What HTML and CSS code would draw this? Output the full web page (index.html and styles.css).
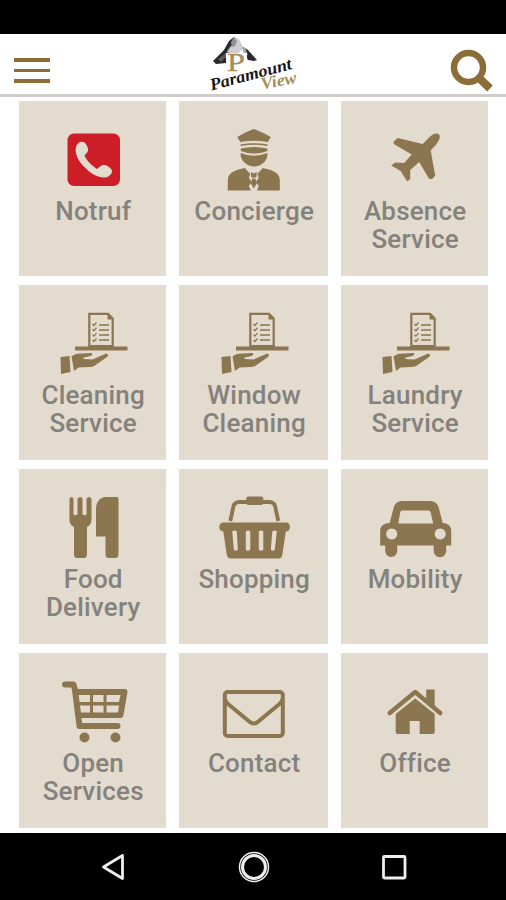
FILE: index.html
```html
<!DOCTYPE html>
<html lang="de">
<head>
  <meta charset="UTF-8" />
  <title>Paramount View</title>
  <link rel="stylesheet" href="styles.css">
</head>
<body>
  <svg class="symbols" aria-hidden="true">
    <symbol id="service" viewBox="-2.5 1 90 80">
      <path d="M38.800 13.800h18.700l4.700 4.700V46H38.800z" fill="none" stroke="#8c7650" stroke-width="2.200"/>
      <path d="M57 13v6.500h6z"/>
      <path d="M24.500 46.500h52.500v4H24.500z"/>
      <path d="M48.500 25h10M48.500 30h10M48.500 35h10M48.500 40h10" fill="none" stroke="#8c7650" stroke-width="1.500"/>
      <path d="M42 24l1.400 1.500 2.600-3M42 29.300l1.400 1.500 2.600-3M42 34.600l1.400 1.500 2.600-3M42 40l1.400 1.500 2.600-3" fill="none" stroke="#8c7650" stroke-width="1.300"/>
      <path d="M10 57l9-1 1 16-9.500 2z"/>
      <path d="M21 56.500c4-3 7-3.200 11-3l8.500-.5c2 0 1.500 2.500-.5 3l-7 1.500v1.500l9 .5 12.500-5.500c3-.8 4 1.500 2 3L44 65.800c-2 1.200-4 1.200-6 1.200l-10 .5-4.500 3.500-1-6z"/>
    </symbol>
  </svg>

  <div class="status-bar"></div>

  <header class="header">
    <button class="menu" aria-label="Menu"><span></span><span></span><span></span></button>
    <svg class="logo" width="110" height="60" viewBox="0 0 110 60">
      <path d="M34 3L29 7l-5 9-11 11 3 3 10-1V19h8l5-9z" fill="#29292c"/>
      <path d="M18 25l8-6 3-6 3-3-5 12-6 6z" fill="#5b5b5f"/>
      <path d="M34 3l5 2 5 10-4 2-1 3-9-1-3-1 5-7z" fill="#cfcfd2"/>
      <path d="M34 3l3 4-2 5-3 1-1-5z" fill="#919196"/>
      <path d="M43 13l5 3 9 10-3 1-6-1-4-8z" fill="#29292c"/>
      <path d="M42 13l3 1 3 7-4-1z" fill="#a8a8ac"/>
      <path d="M26 19h21v9H26z" fill="#fff"/>
      <text class="logo-letter" x="27" y="36.500" textLength="18" lengthAdjust="spacingAndGlyphs">P</text>
      <text class="logo-name" transform="translate(11.500 56.500) rotate(-15)" textLength="84" lengthAdjust="spacingAndGlyphs">Paramount</text>
      <text class="logo-view" transform="translate(62 55.500) rotate(-11)" textLength="36" lengthAdjust="spacingAndGlyphs">View</text>
    </svg>
    <svg class="search" width="44" height="44" viewBox="0 0 44 44">
      <circle cx="18.500" cy="18.500" r="14.500" fill="none" stroke="#8c6d38" stroke-width="6.500"/>
      <path d="M28.500 28.500L40 39.500" stroke="#8c6d38" stroke-width="8"/>
    </svg>
  </header>

  <main class="grid">
    <a class="tile">
      <svg class="icon" viewBox="-2.5 -3.5 90 80">
        <rect x="17" y="13" width="52.500" height="52.500" rx="6.500" fill="#cd1d27"/>
        <path d="M26 25c1.500-3 5-5 8-3 3 3 4.500 7 3 9.500l-3 3.500c2 5 7.500 10.500 12.500 13.500l4.500-3.500c3.500-1.500 7.500 1 10 4 1.500 2.500-.5 5.500-4 7.500-7 2-15-2-21.500-8.500C28 41.500 23 32 26 25z" fill="#e2dbce"/>
      </svg>
      <span class="label">Notruf</span>
    </a>
    <a class="tile">
      <svg class="icon" viewBox="-1.3 -3.5 90 80">
        <path d="M27 16.500L35 12l8.500-3.500L52 12l8.500 4.500-3 5q-14-2.500-27.500 0z"/>
        <path d="M30 24q14-2.500 27.500 0l-.5 1.500q-13-2.500-26.500 0z"/>
        <path d="M30.500 28q13-3 26.500 0v2.500q-13 5-26.500 0z"/>
        <path d="M30.500 32.500q13 5.500 26.500 0C58 41 50 46 43.500 46S29 40 30.500 32.500z"/>
        <path d="M17.500 70V60c0-7 5-10 17-12.500l5.500 6-1.500 4 3 4-3 4 2 4.500z"/>
        <path d="M69.500 70V60c0-7-5-10-17-12.500l-5.500 6 1.500 4-3 4 3 4-2 4.500z"/>
        <path d="M40.500 51.500l3 1.500 3-1.500-.5 5.500h-5zM42 58h3l1.500 5-3 5-3-5z"/>
      </svg>
      <span class="label">Concierge</span>
    </a>
    <a class="tile">
      <svg class="icon" viewBox="-5.2 -3.5 90 80">
        <path d="M64 14c-3-2.500-7.500 0-10.500 3.500L47.500 23.500 22.500 17.500l-4 3.500v2.500L36.500 34 29 42.500l-9-.5-4 3 9.500 5.500L32 61l3-2.500v-9l9-8 10 17 3 0 3-3.500-4.500-25 5.500-6c3-4 4.500-7.500 3-10z"/>
      </svg>
      <span class="label">Absence<br>Service</span>
    </a>

    <a class="tile">
      <svg class="icon"><use href="#service"/></svg>
      <span class="label">Cleaning<br>Service</span>
    </a>
    <a class="tile">
      <svg class="icon"><use href="#service"/></svg>
      <span class="label">Window<br>Cleaning</span>
    </a>
    <a class="tile">
      <svg class="icon"><use href="#service"/></svg>
      <span class="label">Laundry<br>Service</span>
    </a>

    <a class="tile">
      <svg class="icon" viewBox="-2.5 0 90 80">
        <path d="M19 13.500q2-3 4 0V29q1.500 2.500 4 0V13.500q3-3 5 0V29q2 2.500 4 0V13.500q2.500-3 5 0V35q0 5-4.500 7v27q0 4-3 4h-7q-3 0-3-4V42Q19 40 19 35z"/>
        <path d="M68 14v55q0 4-3 4h-7q-3 0-3-4V51.500h-9.500V24c0-7 4-12 10-12h10.500q2 0 2 2z"/>
      </svg>
      <span class="label">Food<br>Delivery</span>
    </a>
    <a class="tile">
      <svg class="icon" viewBox="-1.3 0 90 80">
        <path d="M20 36l3-14q1-5 6-5h30q5 0 6 5l3 14" fill="none" stroke="#8c7650" stroke-width="3.800"/>
        <rect x="36" y="11.500" width="17" height="8.500" rx="2"/>
        <path fill-rule="evenodd" d="M12.500 37.500h63.500q3.500 0 3.500 4.500t-4 4.500L72 70q-.5 3.500-4 3.500H20.500q-3 0-4-3.500L13 46.500Q9 46 9 42t3.500-4.500zM22 46.500l1.500 18q2 2.500 4 0l-1-18q-2-2-4.500 0zM35.500 46.500v18q2 2.500 4.500 0v-18q-2-2-4.500 0zM48.500 46.500v18q2 2.500 4.500 0v-18q-2-2-4.500 0zM62 46.500l-1.500 18q2 2.500 4 0l2-18q-2-2-4.500 0z"/>
      </svg>
      <span class="label">Shopping</span>
    </a>
    <a class="tile">
      <svg class="icon" viewBox="-0.2 0 90 80">
        <path fill-rule="evenodd" d="M33 16h26c5 0 8 2 9.500 6.500L72.500 38C78 38.500 81 41 81 46v14.500h-5V66a6 6 0 0 1-12.500 0v-5.500H27V66a6 6 0 0 1-12 0v-5.500h-5V46c0-5 3-7.500 9.500-8l4-15.500C25 18 28 16 33 16zM32 25.500q-1.500 0-2 2L28 38.500h35l-2.500-11q-.5-2-2-2zM21.500 43.500a5.500 5.500 0 1 0 .01 0zM70 43.500a5.500 5.500 0 1 0 .01 0z"/>
      </svg>
      <span class="label">Mobility</span>
    </a>

    <a class="tile">
      <svg class="icon" viewBox="-2.5 -1 90 80">
        <path d="M14.500 14.500h8.500l1.500 5.500L29 56h38" fill="none" stroke="#8c7650" stroke-width="6" stroke-linecap="round" stroke-linejoin="round"/>
        <path fill-rule="evenodd" d="M23 19h51q3 0 3 3l-4 23q-.500 3-3 3H29zM28 25v7h11.500v-7zM42.500 25v7H53v-7zM56 25v7h12.500l1.500-7zM29 35.500l1 7h9.500v-7zM42.500 35.500v7H53v-7zM56 35.500v7h11.500l1-7z"/>
        <circle cx="34" cy="67.500" r="5"/>
        <circle cx="65" cy="67.500" r="5"/>
      </svg>
      <span class="label">Open<br>Services</span>
    </a>
    <a class="tile">
      <svg class="icon" viewBox="-1.3 -1 90 80">
        <g fill="none" stroke="#8c7650" stroke-width="4">
          <rect x="14.500" y="22" width="58" height="44" rx="3"/>
          <path d="M15 29q0 3 4 6l20 16.500q4.500 4 9 0L68 35q4-3 4-6"/>
        </g>
      </svg>
      <span class="label">Contact</span>
    </a>
    <a class="tile">
      <svg class="icon" viewBox="-0.2 -1 90 80">
        <path d="M19.500 43L45 22l25 21" fill="none" stroke="#8c7650" stroke-width="4.500" stroke-linecap="round" stroke-linejoin="round"/>
        <path d="M56 19.500h8.500V37L56 30z"/>
        <path d="M25.500 44L45 28.500 64.500 44v18q0 2-2 2H49.500V51h-10v13H27.500q-2 0-2-2z"/>
      </svg>
      <span class="label">Office</span>
    </a>
  </main>

  <nav class="nav-bar">
    <svg width="32" height="32" viewBox="0 0 32 32"><path d="M24.500 4.500v23L5.500 16z"/></svg>
    <svg width="32" height="32" viewBox="0 0 32 32"><circle cx="16" cy="16" r="14.500" stroke-width="1.500"/><circle cx="16" cy="16" r="11.500" stroke-width="3"/></svg>
    <svg width="32" height="32" viewBox="0 0 32 32"><rect x="5.500" y="5.500" width="21.500" height="21.500" rx="1"/></svg>
  </nav>
</body>
</html>
```
FILE: styles.css
```css
:root {
  --gold: #8c7650;
  --tile: #e2dbce;
  --text: #85817c;
}

* {
  margin: 0;
  padding: 0;
  box-sizing: border-box;
}

body {
  width: 506px;
  height: 900px;
  overflow: hidden;
  background-color: #fff;
  font-family: Roboto, "Liberation Sans", sans-serif;
  display: flex;
  flex-direction: column;
}

.symbols {
  display: none;
}

.status-bar {
  height: 34px;
  background-color: #000;
}

.header {
  height: 63px;
  display: flex;
  align-items: flex-start;
  justify-content: space-between;
  padding: 0 12px 0 14px;
  border-bottom: 3px solid #d0ccc9;
}

.menu {
  width: 36px;
  margin-top: 24px;
  border: none;
  background: none;
  display: flex;
  flex-direction: column;
  gap: 7px;
}

.menu span {
  height: 3.5px;
  background-color: #8c6d38;
}

.logo {
  margin-left: 10px;
  overflow: visible;
}

.logo-letter {
  font: 25px "Liberation Serif", serif;
  fill: #a98d55;
  stroke: #a98d55;
  stroke-width: 0.3px;
}

.logo-name,
.logo-view {
  font: italic bold 17px "Liberation Serif", serif;
  fill: #17171a;
}

.logo-view {
  fill: #a98d55;
}

.search {
  margin-top: 15px;
}

.grid {
  flex: 1;
  display: grid;
  grid-template-columns: 147.4px 148.4px 147.4px;
  grid-auto-rows: 175.2px;
  gap: 9px 13.1px;
  padding: 3.6px 0 0 19px;
}

.tile {
  background-color: var(--tile);
  padding-top: 16px;
  display: flex;
  flex-direction: column;
  align-items: center;
}

.icon {
  width: 90px;
  height: 80px;
  fill: var(--gold);
}

.label {
  padding-left: 1px;
  font-size: 26px;
  font-weight: 500;
  line-height: 28px;
  letter-spacing: 0.2px;
  font-variant-ligatures: none;
  text-align: center;
  color: var(--text);
}

.nav-bar {
  height: 67px;
  background-color: #000;
  display: flex;
  align-items: center;
  justify-content: space-between;
  padding: 0 96px 0 98px;
}

.nav-bar svg {
  fill: none;
  stroke: #eee;
  stroke-width: 2.8px;
  stroke-linejoin: round;
}
```
